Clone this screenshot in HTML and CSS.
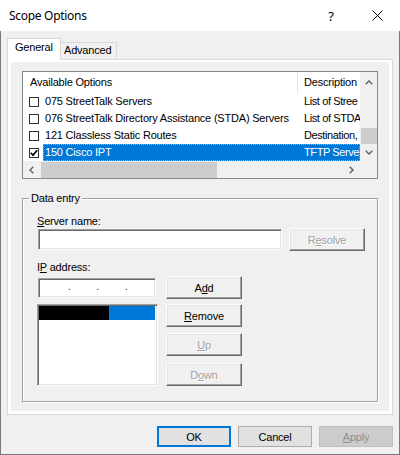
FILE: index.html
```html
<!DOCTYPE html>
<html lang="en">
<head>
<meta charset="utf-8">
<title>Scope Options</title>
<link rel="stylesheet" href="styles.css">
</head>
<body>
<div class="window">
  <div class="titlebar">
    <span class="title">Scope Options</span>
    <span class="tb-btn help">?</span>
    <span class="tb-btn close"><svg width="11" height="11" viewBox="0 0 11 11"><path d="M0.5 0.5L10.5 10.5M10.5 0.5L0.5 10.5" stroke="#000" stroke-width="1" fill="none"/></svg></span>
  </div>
  <div class="client">
    <div class="tabs">
      <div class="tab active">General</div>
      <div class="tab">Advanced</div>
    </div>
    <div class="panel">
      <div class="page">
        <div class="listview">
          <div class="lv-main">
            <div class="lv-header">
              <div class="hcol hname">Available Options</div>
              <div class="hcol hdesc">Description</div>
            </div>
            <div class="lv-row">
              <div class="chk-cell"><span class="chk"></span></div>
              <div class="sel"><span class="name">075 StreetTalk Servers</span><span class="desc">List of Stree</span></div>
            </div>
            <div class="lv-row">
              <div class="chk-cell"><span class="chk"></span></div>
              <div class="sel"><span class="name">076 StreetTalk Directory Assistance (STDA) Servers</span><span class="desc">List of STDA</span></div>
            </div>
            <div class="lv-row">
              <div class="chk-cell"><span class="chk"></span></div>
              <div class="sel"><span class="name">121 Classless Static Routes</span><span class="desc">Destination,</span></div>
            </div>
            <div class="lv-row selected">
              <div class="chk-cell"><span class="chk"><svg width="8" height="8" viewBox="0 0 8 8"><path d="M0.8 3.8L3 6.2L7.2 1.2" fill="none" stroke="#000" stroke-width="1.7"/></svg></span></div>
              <div class="sel"><span class="name">150 Cisco IPT</span><span class="desc">TFTP Serve</span></div>
            </div>
          </div>
          <div class="vscroll">
            <div class="sb-btn"><svg width="8" height="5" viewBox="0 0 8 5"><path d="M0.7 4.3L4 1L7.3 4.3" fill="none" stroke="#606060" stroke-width="1.4"/></svg></div>
            <div class="vtrack"><div class="vthumb"></div></div>
            <div class="sb-btn"><svg width="8" height="5" viewBox="0 0 8 5"><path d="M0.7 0.7L4 4L7.3 0.7" fill="none" stroke="#606060" stroke-width="1.4"/></svg></div>
          </div>
          <div class="hscroll">
            <div class="sb-btn"><svg width="5" height="8" viewBox="0 0 5 8"><path d="M4.3 0.7L1 4L4.3 7.3" fill="none" stroke="#606060" stroke-width="1.4"/></svg></div>
            <div class="htrack"><div class="hthumb"></div></div>
            <div class="sb-btn"><svg width="5" height="8" viewBox="0 0 5 8"><path d="M0.7 0.7L4 4L0.7 7.3" fill="none" stroke="#606060" stroke-width="1.4"/></svg></div>
          </div>
          <div class="corner"></div>
        </div>

        <fieldset class="group">
          <legend>Data entry</legend>
          <div class="lbl"><u>S</u>erver name:</div>
          <div class="row1">
            <div class="edit server"></div>
            <div class="btn3d disabled">R<u>e</u>solve</div>
          </div>
          <div class="lbl lbl-ip">I<u>P</u> address:</div>
          <div class="ipgrid">
            <div class="edit ipbox"><span class="ipseg">.</span><span class="ipseg">.</span><span class="ipseg">.</span></div>
            <div class="btn3d">A<u>d</u>d</div>
            <div class="edit listbox">
              <div class="lb-item"><span class="lb-black"></span><span class="lb-blue"></span></div>
            </div>
            <div class="btn-stack">
              <div class="btn3d"><u>R</u>emove</div>
              <div class="btn3d disabled up"><u>U</u>p</div>
              <div class="btn3d disabled down">D<u>o</u>wn</div>
            </div>
          </div>
        </fieldset>
      </div>
    </div>
    <div class="footer">
      <div class="pbtn default">OK</div>
      <div class="pbtn">Cancel</div>
      <div class="pbtn disabled"><u>A</u>pply</div>
    </div>
  </div>
</div>
</body>
</html>
```

FILE: styles.css
```css
* { box-sizing: border-box; }
html, body { margin: 0; padding: 0; }
body {
  width: 400px;
  height: 455px;
  overflow: hidden;
  background: #f0f0f0;
  font-family: "Liberation Sans", Arial, sans-serif;
  font-size: 11px;
  letter-spacing: -0.2px;
  color: #000;
}
u { text-decoration: underline; text-decoration-skip-ink: none; text-underline-offset: 1px; }

.window { width: 400px; height: 455px; display: flex; flex-direction: column; }

.titlebar { height: 31px; flex: none; background: #fff; display: flex; align-items: center; }
.title {
  flex: 1;
  padding-left: 9px;
  font-family: "Segoe UI", "Noto Sans", sans-serif;
  font-size: 12px;
  letter-spacing: -0.3px;
}
.tb-btn { width: 46px; height: 31px; display: flex; align-items: center; justify-content: center; }
.help { font-family: "Noto Sans", sans-serif; font-size: 13px; letter-spacing: 0; }

.client {
  flex: 1;
  background: #f0f0f0;
  border: 1px solid #7a7a7a;
  border-top: none;
  padding: 7px 6px 0 6px;
}

/* tabs */
.tabs { display: flex; align-items: flex-end; height: 21px; }
.tab {
  height: 17px;
  width: 57px;
  margin-left: -1px;
  padding-left: 3px;
  line-height: 15px;
  border: 1px solid #d9d9d9;
  border-bottom: none;
  background: #f0f0f0;
}
.tab.active {
  width: 54px;
  height: 22px;
  margin-left: 0;
  margin-bottom: -1px;
  padding-left: 7px;
  line-height: 17px;
  background: #fff;
  position: relative;
  z-index: 1;
}

.panel {
  height: 356px;
  border: 1px solid #d9d9d9;
  background: #fff;
  padding: 2px 3px 3px 3px;
}
.page { height: 100%; background: #f0f0f0; padding-top: 9px; }

/* list view */
.listview {
  margin: 0 11px;
  height: 108px;
  border: 1px solid #828790;
  background: #fff;
  display: grid;
  grid-template-columns: 1fr 17px;
  grid-template-rows: 1fr 17px;
}
.lv-main { overflow: hidden; grid-row: 1; grid-column: 1; }
.lv-header { display: flex; height: 21px; white-space: nowrap; }
.hcol { line-height: 21px; overflow: hidden; flex: none; }
.hname { width: 275px; padding-left: 7px; border-right: 1px solid #e5e5e5; }
.hdesc { width: 62px; padding-left: 6px; }

.lv-row { display: flex; height: 17px; white-space: nowrap; }
.chk-cell { width: 20px; flex: none; display: flex; align-items: center; padding-left: 6px; }
.chk {
  width: 10px;
  height: 10px;
  border: 1px solid #333;
  background: #fff;
  display: flex;
}
.sel { flex: 1; display: flex; line-height: 17px; min-width: 0; }
.name { width: 255px; flex: none; padding-left: 2px; overflow: hidden; }
.desc { flex: 1; padding-left: 6px; overflow: hidden; letter-spacing: -0.4px; }
.lv-row.selected .sel {
  background: #0078d7;
  color: #fff;
  outline: 1px dotted #f59a4a;
  outline-offset: -1px;
}

.vscroll { grid-row: 1; grid-column: 2; background: #f0f0f0; display: flex; flex-direction: column; }
.sb-btn { width: 17px; height: 17px; flex: none; display: flex; align-items: center; justify-content: center; }
.vscroll .sb-btn:first-child { align-items: flex-end; padding-bottom: 4px; }
.vtrack { flex: 1; display: flex; flex-direction: column; justify-content: flex-end; }
.vthumb { height: 16px; margin-left: 1px; background: #cdcdcd; }

.hscroll { grid-row: 2; grid-column: 1; background: #f0f0f0; display: flex; }
.htrack { flex: 1; display: flex; align-items: flex-end; }
.hthumb { width: 176px; height: 16px; margin-left: 1px; background: #cdcdcd; }
.corner { grid-row: 2; grid-column: 2; background: #f0f0f0; }

/* group box */
.group {
  margin: 13px 11px 0;
  padding: 10px 12px 15px 15px;
  border: 1px solid #a0a0a0;
  box-shadow: inset 1px 1px 0 #fff, 1px 1px 0 #fff;
  min-width: 0;
}
.group legend {
  margin-left: -9px;
  padding: 0 2px;
  line-height: 13px;
  background: #f0f0f0;
}
.lbl { line-height: 13px; margin-left: -1px; }
.lbl-ip { margin-top: 10px; }

.edit {
  background: #fff;
  border: 1px solid;
  border-color: #a0a0a0 #fff #fff #a0a0a0;
  box-shadow: inset 1px 1px 0 #696969, inset -1px -1px 0 #e3e3e3;
}
.row1 { display: flex; align-items: center; height: 23px; gap: 7px; }
.server { width: 244px; height: 21px; }

.btn3d {
  width: 76px;
  height: 23px;
  flex: none;
  background: #f0f0f0;
  border: 1px solid;
  border-color: #fff #696969 #696969 #fff;
  box-shadow: inset -1px -1px 0 #a0a0a0, inset 1px 1px 0 #e3e3e3;
  display: flex;
  align-items: center;
  justify-content: center;
}
.btn3d.disabled { color: #a0a0a0; text-shadow: 1px 1px 0 #fff; }

.ipgrid {
  margin-top: 2px;
  margin-left: -1px;
  display: grid;
  grid-template-columns: 121px 76px;
  column-gap: 8px;
  row-gap: 5px;
}
.ipbox {
  margin-left: 1px;
  width: 118px;
  height: 20px;
  align-self: center;
  display: flex;
  padding-left: 3px;
}
.ipseg { width: 28.5px; text-align: right; line-height: 15px; color: #333; }
.listbox { height: 82px; padding: 1px 1px 0 1px; }
.lb-item { display: flex; height: 14px; margin-right: 1px; }
.lb-black { width: 70px; background: #000; }
.lb-blue { flex: 1; background: #0078d7; }
.btn-stack { display: flex; flex-direction: column; }
.btn-stack .up { margin-top: 6px; }
.btn-stack .down { margin-top: 7px; }

/* footer buttons */
.footer { display: flex; justify-content: flex-end; gap: 7px; margin-top: 11px; }
.pbtn {
  width: 74px;
  height: 21px;
  background: #e1e1e1;
  border: 1px solid #adadad;
  display: flex;
  align-items: center;
  justify-content: center;
}
.pbtn.default { border: 2px solid #0078d7; }
.pbtn.disabled { background: #cccccc; border-color: #bfbfbf; color: #8f8f8f; }
```
